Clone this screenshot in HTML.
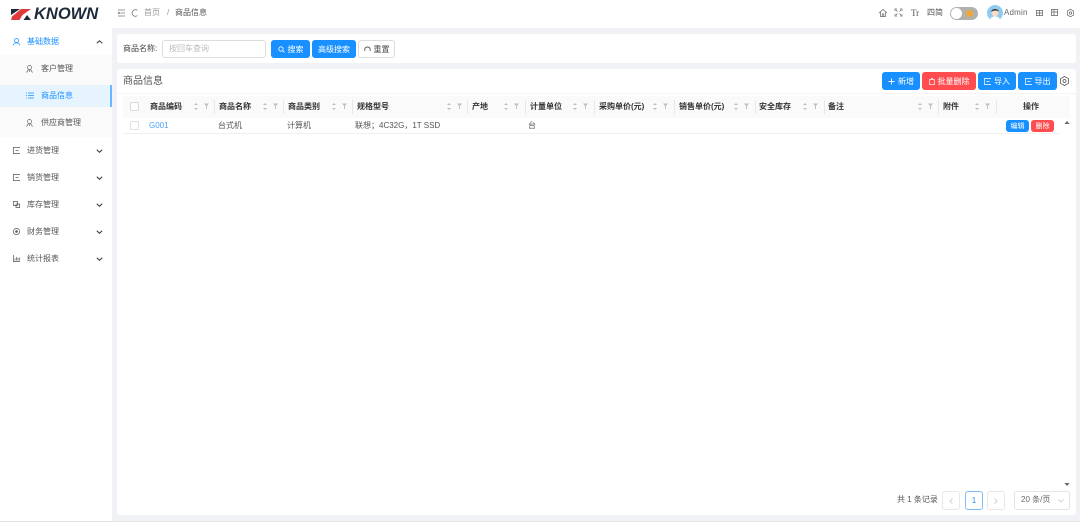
<!DOCTYPE html>
<html lang="zh"><head><meta charset="utf-8"><title>商品信息</title>
<style>
*{box-sizing:border-box}
html,body{margin:0;padding:0}
body{width:1080px;height:522px;overflow:hidden;position:relative;background:#f0f2f5;font-family:"Liberation Sans","Noto Sans CJK SC",sans-serif;font-size:8px;color:#444}
.a{position:absolute;white-space:nowrap}
.t{position:absolute;white-space:nowrap;line-height:12px;height:12px}
.b{position:absolute;border-radius:3px;color:#fff;background:#1890ff;display:flex;align-items:center;justify-content:center;font-size:8px;white-space:nowrap;gap:3px}
.r{background:#ff4d4f}
.h{font-weight:bold;color:#333}
.d{position:absolute;top:100px;width:1px;height:14px;background:#e8e8e8}
svg{position:absolute;overflow:visible;fill:none}
.m{stroke:#666;stroke-width:.8}
</style></head><body>

<div class="a" style="left:0;top:0;width:1080px;height:28px;background:#fff"></div>
<div class="a" style="left:0;top:28px;width:112px;height:494px;background:#fff"></div>
<div class="a" style="left:0;top:521px;width:1080px;height:1px;background:#e2e3e6"></div>

<!-- logo -->
<svg style="left:11px;top:8px" width="21" height="13" viewBox="0 0 21 13">
<path d="M0 1H9L0 7Z" fill="#1d2a3a"/>
<path d="M0 12L1 8.500L10 1H20L11.500 7L8.500 12Z" fill="#e03a3a"/>
<path d="M12.500 12L16 7L20 12Z" fill="#1d2a3a"/>
</svg>
<div class="t" style="left:34px;top:5px;height:18px;font:italic bold 16.5px/18px 'Liberation Sans',sans-serif;color:#1d2a3a">KNOWN</div>

<!-- breadcrumb -->
<svg style="left:118px;top:9px" width="8" height="8" class="m"><path d="M0 1H7M3 4H7M0 7H7M0 3L2 4L0 5" stroke="#777" stroke-width=".8"/></svg>
<svg style="left:131px;top:9px" width="8" height="8"><path d="M6.500 1.500A3.300 3.300 0 1 0 6.500 6.500" stroke="#777" stroke-width=".8"/></svg>
<div class="t" style="left:144px;top:7px;color:#999">首页</div>
<div class="t" style="left:167px;top:7px;color:#999">/</div>
<div class="t" style="left:175px;top:7px;color:#555">商品信息</div>

<!-- top right -->
<svg style="left:879px;top:9px" width="8" height="8"><path d="M0 4L4 .5L8 4M1.500 3V7.500H6.500V3M3.200 7.500V5H4.800V7.500" stroke="#666" stroke-width=".7"/></svg>
<svg style="left:895px;top:9px" width="7" height="7"><path d="M0 2V0H2M5 0H7V2M7 5V7H5M2 7H0V5M1 1L2.500 2.500M6 1L4.500 2.500M6 6L4.500 4.500M1 6L2.500 4.500" stroke="#666" stroke-width=".7"/></svg>
<div class="t" style="left:911px;top:7px;font-family:'Liberation Serif',serif;color:#555;font-size:9px">Tr</div>
<div class="t" style="left:927px;top:7px;color:#555;font-size:8px">四简</div>
<div class="a" style="left:950px;top:7px;width:28px;height:13px;border-radius:7px;background:#b2b0aa"></div>
<div class="a" style="left:951px;top:8px;width:11px;height:11px;border-radius:50%;background:#fff"></div>
<div class="a" style="left:966px;top:10px;width:7px;height:7px;border-radius:50%;background:#f0a63c"></div>

<svg style="left:987px;top:5px" width="16" height="16" viewBox="0 0 16 16">
<circle cx="8" cy="8" r="8" fill="#8fcbee"/>
<path d="M3 16C3 12.500 5 11.500 8 11.500S13 12.500 13 16Z" fill="#fff"/>
<ellipse cx="8" cy="7.500" rx="3.500" ry="4" fill="#fbdcc8"/>
<path d="M4.300 7C4 2.800 12 2.800 11.700 7C10.500 5 6 5.500 4.300 7Z" fill="#3a4450"/>
</svg>
<div class="t" style="left:1004px;top:7px;color:#666;font-size:8px;letter-spacing:.2px">Admin</div>
<svg style="left:1036px;top:10px" width="7" height="6"><path d="M.4.4H6.600V5.600H.4ZM.4 3H6.600M3.500.4V5.600" stroke="#666" stroke-width=".7"/></svg>
<svg style="left:1051px;top:9px" width="7" height="7"><path d="M.4.4H6.600V6.600H.4ZM.4 3H6.600M3 .4V6.600" stroke="#666" stroke-width=".7"/></svg>
<svg style="left:1067px;top:9px" width="7" height="8"><path d="M3.500.3L6.600 2V6L3.500 7.700L.4 6V2Z" stroke="#666" stroke-width=".7"/><circle cx="3.500" cy="4" r="1.200" stroke="#666" stroke-width=".7"/></svg>

<!-- sidebar -->
<div class="a" style="left:0;top:55px;width:112px;height:82px;background:#fafafa"></div>
<div class="a" style="left:0;top:85px;width:112px;height:22px;background:#e6f4ff"></div>
<div class="a" style="left:110px;top:85px;width:2px;height:22px;background:#69b8ff"></div>

<svg style="left:13px;top:38px" width="7" height="8"><circle cx="3.500" cy="2.500" r="2" stroke="#1890ff" stroke-width=".8"/><path d="M.5 7.500C.5 4 6.500 4 6.500 7.500" stroke="#1890ff" stroke-width=".8"/></svg>
<div class="t" style="left:27px;top:36px;color:#1890ff">基础数据</div>
<svg style="left:96px;top:40px" width="7" height="4"><path d="M.8 3.300L3.500 .8L6.200 3.300" stroke="#333" stroke-width="1"/></svg>

<svg style="left:26px;top:65px" width="7" height="8"><circle cx="3.500" cy="2.500" r="2" stroke="#666" stroke-width=".7"/><path d="M.5 7.500L2.500 4.500M6.500 7.500L4.500 4.500M3.500 5V7" stroke="#666" stroke-width=".7"/></svg>
<div class="t" style="left:41px;top:63px;color:#555">客户管理</div>
<svg style="left:26px;top:92px" width="8" height="7"><path d="M2 1H8M2 3.500H8M2 6H8M0 1H1M0 3.500H1M0 6H1" stroke="#1890ff" stroke-width=".7"/></svg>
<div class="t" style="left:41px;top:90px;color:#1890ff">商品信息</div>
<svg style="left:26px;top:119px" width="7" height="8"><circle cx="3.500" cy="2.500" r="2" stroke="#666" stroke-width=".7"/><path d="M.5 7.500L2.500 4.500M6.500 7.500L4.500 4.500M3.500 5V7" stroke="#666" stroke-width=".7"/></svg>
<div class="t" style="left:41px;top:117px;color:#555">供应商管理</div>

<svg style="left:13px;top:147px" width="7" height="7"><path d="M6.500 1V.4H.4V6.600H6.500V6M2.500 3.500H5.500" stroke="#555" stroke-width=".7"/></svg>
<div class="t" style="left:27px;top:145px;color:#555">进货管理</div>
<svg style="left:13px;top:174px" width="7" height="7"><path d="M6.500 1V.4H.4V6.600H6.500V6M2.500 3.500H5.500" stroke="#555" stroke-width=".7"/></svg>
<div class="t" style="left:27px;top:172px;color:#555">销货管理</div>
<svg style="left:13px;top:201px" width="7" height="7"><path d="M.4.4H4.500V4.500H.4ZM3 3H6.600V6.600H3Z" stroke="#555" stroke-width=".7"/></svg>
<div class="t" style="left:27px;top:199px;color:#555">库存管理</div>
<svg style="left:13px;top:228px" width="7" height="7"><circle cx="3.500" cy="3.500" r="3.100" stroke="#555" stroke-width=".7"/><circle cx="3.500" cy="3.500" r="1.300" fill="#555"/></svg>
<div class="t" style="left:27px;top:226px;color:#555">财务管理</div>
<svg style="left:13px;top:255px" width="7" height="7"><path d="M.4 0V6.600H7M2 5.500V3.500M3.500 5.500V2M5 5.500V3M6.300 5.500V2.500" stroke="#555" stroke-width=".7"/></svg>
<div class="t" style="left:27px;top:253px;color:#555">统计报表</div>
<svg style="left:96px;top:149px" width="7" height="4"><path d="M.8.8L3.500 3.300L6.200.8" stroke="#333" stroke-width="1"/></svg>
<svg style="left:96px;top:176px" width="7" height="4"><path d="M.8.8L3.500 3.300L6.200.8" stroke="#333" stroke-width="1"/></svg>
<svg style="left:96px;top:203px" width="7" height="4"><path d="M.8.8L3.500 3.300L6.200.8" stroke="#333" stroke-width="1"/></svg>
<svg style="left:96px;top:230px" width="7" height="4"><path d="M.8.8L3.500 3.300L6.200.8" stroke="#333" stroke-width="1"/></svg>
<svg style="left:96px;top:257px" width="7" height="4"><path d="M.8.8L3.500 3.300L6.200.8" stroke="#333" stroke-width="1"/></svg>

<!-- search card -->
<div class="a" style="left:117px;top:34px;width:959px;height:29px;background:#fff;border-radius:3px"></div>
<div class="t" style="left:123px;top:43px;color:#444">商品名称:</div>
<div class="a" style="left:162px;top:40px;width:104px;height:18px;border:1px solid #dcdcdc;border-radius:3px;background:#fff"></div>
<div class="t" style="left:169px;top:43px;color:#bbb">按回车查询</div>
<div class="b" style="left:271px;top:40px;width:39px;height:18px"><svg style="position:static" width="7" height="7"><circle cx="3" cy="3" r="2.200" stroke="#fff" stroke-width=".8"/><path d="M4.600 4.600L6.500 6.500" stroke="#fff" stroke-width=".8"/></svg>搜索</div>
<div class="b" style="left:312px;top:40px;width:44px;height:18px">高级搜索</div>
<div class="b" style="left:358px;top:40px;width:37px;height:18px;background:#fff;border:1px solid #dcdcdc;color:#444"><svg style="position:static" width="7" height="7"><path d="M1 5A2.800 2.800 0 1 1 6 5" stroke="#444" stroke-width=".8"/></svg>重置</div>

<!-- table card -->
<div class="a" style="left:117px;top:69px;width:959px;height:446px;background:#fff;border-radius:3px"></div>
<div class="t" style="left:123px;top:75px;font-size:10px;color:#555;height:14px;line-height:14px">商品信息</div>
<div class="a" style="left:117px;top:93px;width:959px;height:1px;background:#f4f4f4"></div>

<div class="b" style="left:882px;top:72px;width:38px;height:18px"><svg style="position:static" width="7" height="7"><path d="M3.500.5V6.500M.5 3.500H6.500" stroke="#fff" stroke-width="1"/></svg>新增</div>
<div class="b r" style="left:922px;top:72px;width:54px;height:18px"><svg style="position:static" width="6" height="7"><path d="M.7 1.500H5.300V6.600H.7ZM2 .6H4" stroke="#fff" stroke-width=".7"/></svg>批量删除</div>
<div class="b" style="left:978px;top:72px;width:38px;height:18px"><svg style="position:static" width="7" height="7"><path d="M6.500 1V.4H.4V6.600H6.500V6M2.500 3.500H5.500" stroke="#fff" stroke-width=".7"/></svg>导入</div>
<div class="b" style="left:1018px;top:72px;width:39px;height:18px"><svg style="position:static" width="7" height="7"><path d="M6.500 1V.4H.4V6.600H6.500V6M2.500 3.500H5.500" stroke="#fff" stroke-width=".7"/></svg>导出</div>
<svg style="left:1060px;top:76px" width="9" height="10"><path d="M4.500.5L8.500 2.700V7.300L4.500 9.500L.5 7.300V2.700Z" stroke="#555" stroke-width=".8"/><circle cx="4.500" cy="5" r="1.500" stroke="#555" stroke-width=".8"/></svg>

<!-- table head -->
<div class="a" style="left:123px;top:96px;width:947px;height:22px;background:#fafafa"></div>
<div class="a" style="left:130px;top:102px;width:9px;height:9px;border:1px solid #d9d9d9;border-radius:2px;background:#fff"></div>
<div class="t h" style="left:150px;top:101px">商品编码</div>
<div class="t h" style="left:219px;top:101px">商品名称</div>
<div class="t h" style="left:288px;top:101px">商品类别</div>
<div class="t h" style="left:357px;top:101px">规格型号</div>
<div class="t h" style="left:472px;top:101px">产地</div>
<div class="t h" style="left:530px;top:101px">计量单位</div>
<div class="t h" style="left:599px;top:101px">采购单价(元)</div>
<div class="t h" style="left:679px;top:101px">销售单价(元)</div>
<div class="t h" style="left:759px;top:101px">安全库存</div>
<div class="t h" style="left:828px;top:101px">备注</div>
<div class="t h" style="left:943px;top:101px">附件</div>
<div class="t h" style="left:1023px;top:101px">操作</div>

<div class="d" style="left:214px"></div><div class="d" style="left:283px"></div><div class="d" style="left:352px"></div><div class="d" style="left:467px"></div><div class="d" style="left:525px"></div><div class="d" style="left:594px"></div><div class="d" style="left:674px"></div><div class="d" style="left:755px"></div><div class="d" style="left:824px"></div><div class="d" style="left:938px"></div><div class="d" style="left:996px"></div>

<svg style="left:0;top:0" width="1080" height="130">
<g fill="#bfbfbf">
<path d="M194 105l2-2 2 2zM194 108l2 2 2-2zM204 103.500h5l-2 2.500v3h-1v-3z"/>
<path d="M263 105l2-2 2 2zM263 108l2 2 2-2zM273 103.500h5l-2 2.500v3h-1v-3z"/>
<path d="M332 105l2-2 2 2zM332 108l2 2 2-2zM342 103.500h5l-2 2.500v3h-1v-3z"/>
<path d="M447 105l2-2 2 2zM447 108l2 2 2-2zM457 103.500h5l-2 2.500v3h-1v-3z"/>
<path d="M504 105l2-2 2 2zM504 108l2 2 2-2zM514 103.500h5l-2 2.500v3h-1v-3z"/>
<path d="M573 105l2-2 2 2zM573 108l2 2 2-2zM583 103.500h5l-2 2.500v3h-1v-3z"/>
<path d="M653 105l2-2 2 2zM653 108l2 2 2-2zM663 103.500h5l-2 2.500v3h-1v-3z"/>
<path d="M734 105l2-2 2 2zM734 108l2 2 2-2zM744 103.500h5l-2 2.500v3h-1v-3z"/>
<path d="M803 105l2-2 2 2zM803 108l2 2 2-2zM813 103.500h5l-2 2.500v3h-1v-3z"/>
<path d="M918 105l2-2 2 2zM918 108l2 2 2-2zM928 103.500h5l-2 2.500v3h-1v-3z"/>
<path d="M975 105l2-2 2 2zM975 108l2 2 2-2zM985 103.500h5l-2 2.500v3h-1v-3z"/>
</g>
</svg>

<!-- row -->
<div class="a" style="left:123px;top:133px;width:937px;height:1px;background:#f0f0f0"></div>
<div class="a" style="left:130px;top:121px;width:9px;height:9px;border:1px solid #e0e0e0;border-radius:2px;background:#fff"></div>
<div class="t" style="left:149px;top:120px;color:#4aa3f5">G001</div>
<div class="t" style="left:218px;top:120px;color:#555">台式机</div>
<div class="t" style="left:287px;top:120px;color:#555">计算机</div>
<div class="t" style="left:355px;top:120px;color:#555">联想；4C32G，1T SSD</div>
<div class="t" style="left:528px;top:120px;color:#555">台</div>
<div class="b" style="left:1006px;top:120px;width:23px;height:12px;font-size:7px">编辑</div>
<div class="b r" style="left:1031px;top:120px;width:23px;height:12px;font-size:7px">删除</div>

<svg style="left:1064px;top:121px" width="6" height="3"><path d="M3 0L5.500 3H.5Z" fill="#666"/></svg>
<svg style="left:1064px;top:483px" width="6" height="3"><path d="M3 3L5.500 0H.5Z" fill="#666"/></svg>

<!-- pagination -->
<div class="t" style="left:897px;top:494px;color:#555">共 1 条记录</div>
<div class="a" style="left:942px;top:491px;width:18px;height:19px;border:1px solid #e8e8e8;border-radius:3px"></div>
<svg style="left:949px;top:498px" width="4" height="6"><path d="M3.500.5L1 3L3.500 5.500" stroke="#c4c4c4" stroke-width=".8"/></svg>
<div class="a" style="left:965px;top:491px;width:18px;height:19px;border:1px solid #7dbdf8;border-radius:3px;color:#1890ff;text-align:center;line-height:17px">1</div>
<div class="a" style="left:987px;top:491px;width:18px;height:19px;border:1px solid #e8e8e8;border-radius:3px"></div>
<svg style="left:994px;top:498px" width="4" height="6"><path d="M.5.5L3 3L.5 5.500" stroke="#c4c4c4" stroke-width=".8"/></svg>
<div class="a" style="left:1014px;top:491px;width:56px;height:19px;border:1px solid #e4e4e4;border-radius:3px"></div>
<div class="t" style="left:1021px;top:494px;color:#666">20 条/页</div>
<svg style="left:1058px;top:499px" width="6" height="4"><path d="M.5.5L3 3L5.500.5" stroke="#c4c4c4" stroke-width=".8"/></svg>

</body></html>
